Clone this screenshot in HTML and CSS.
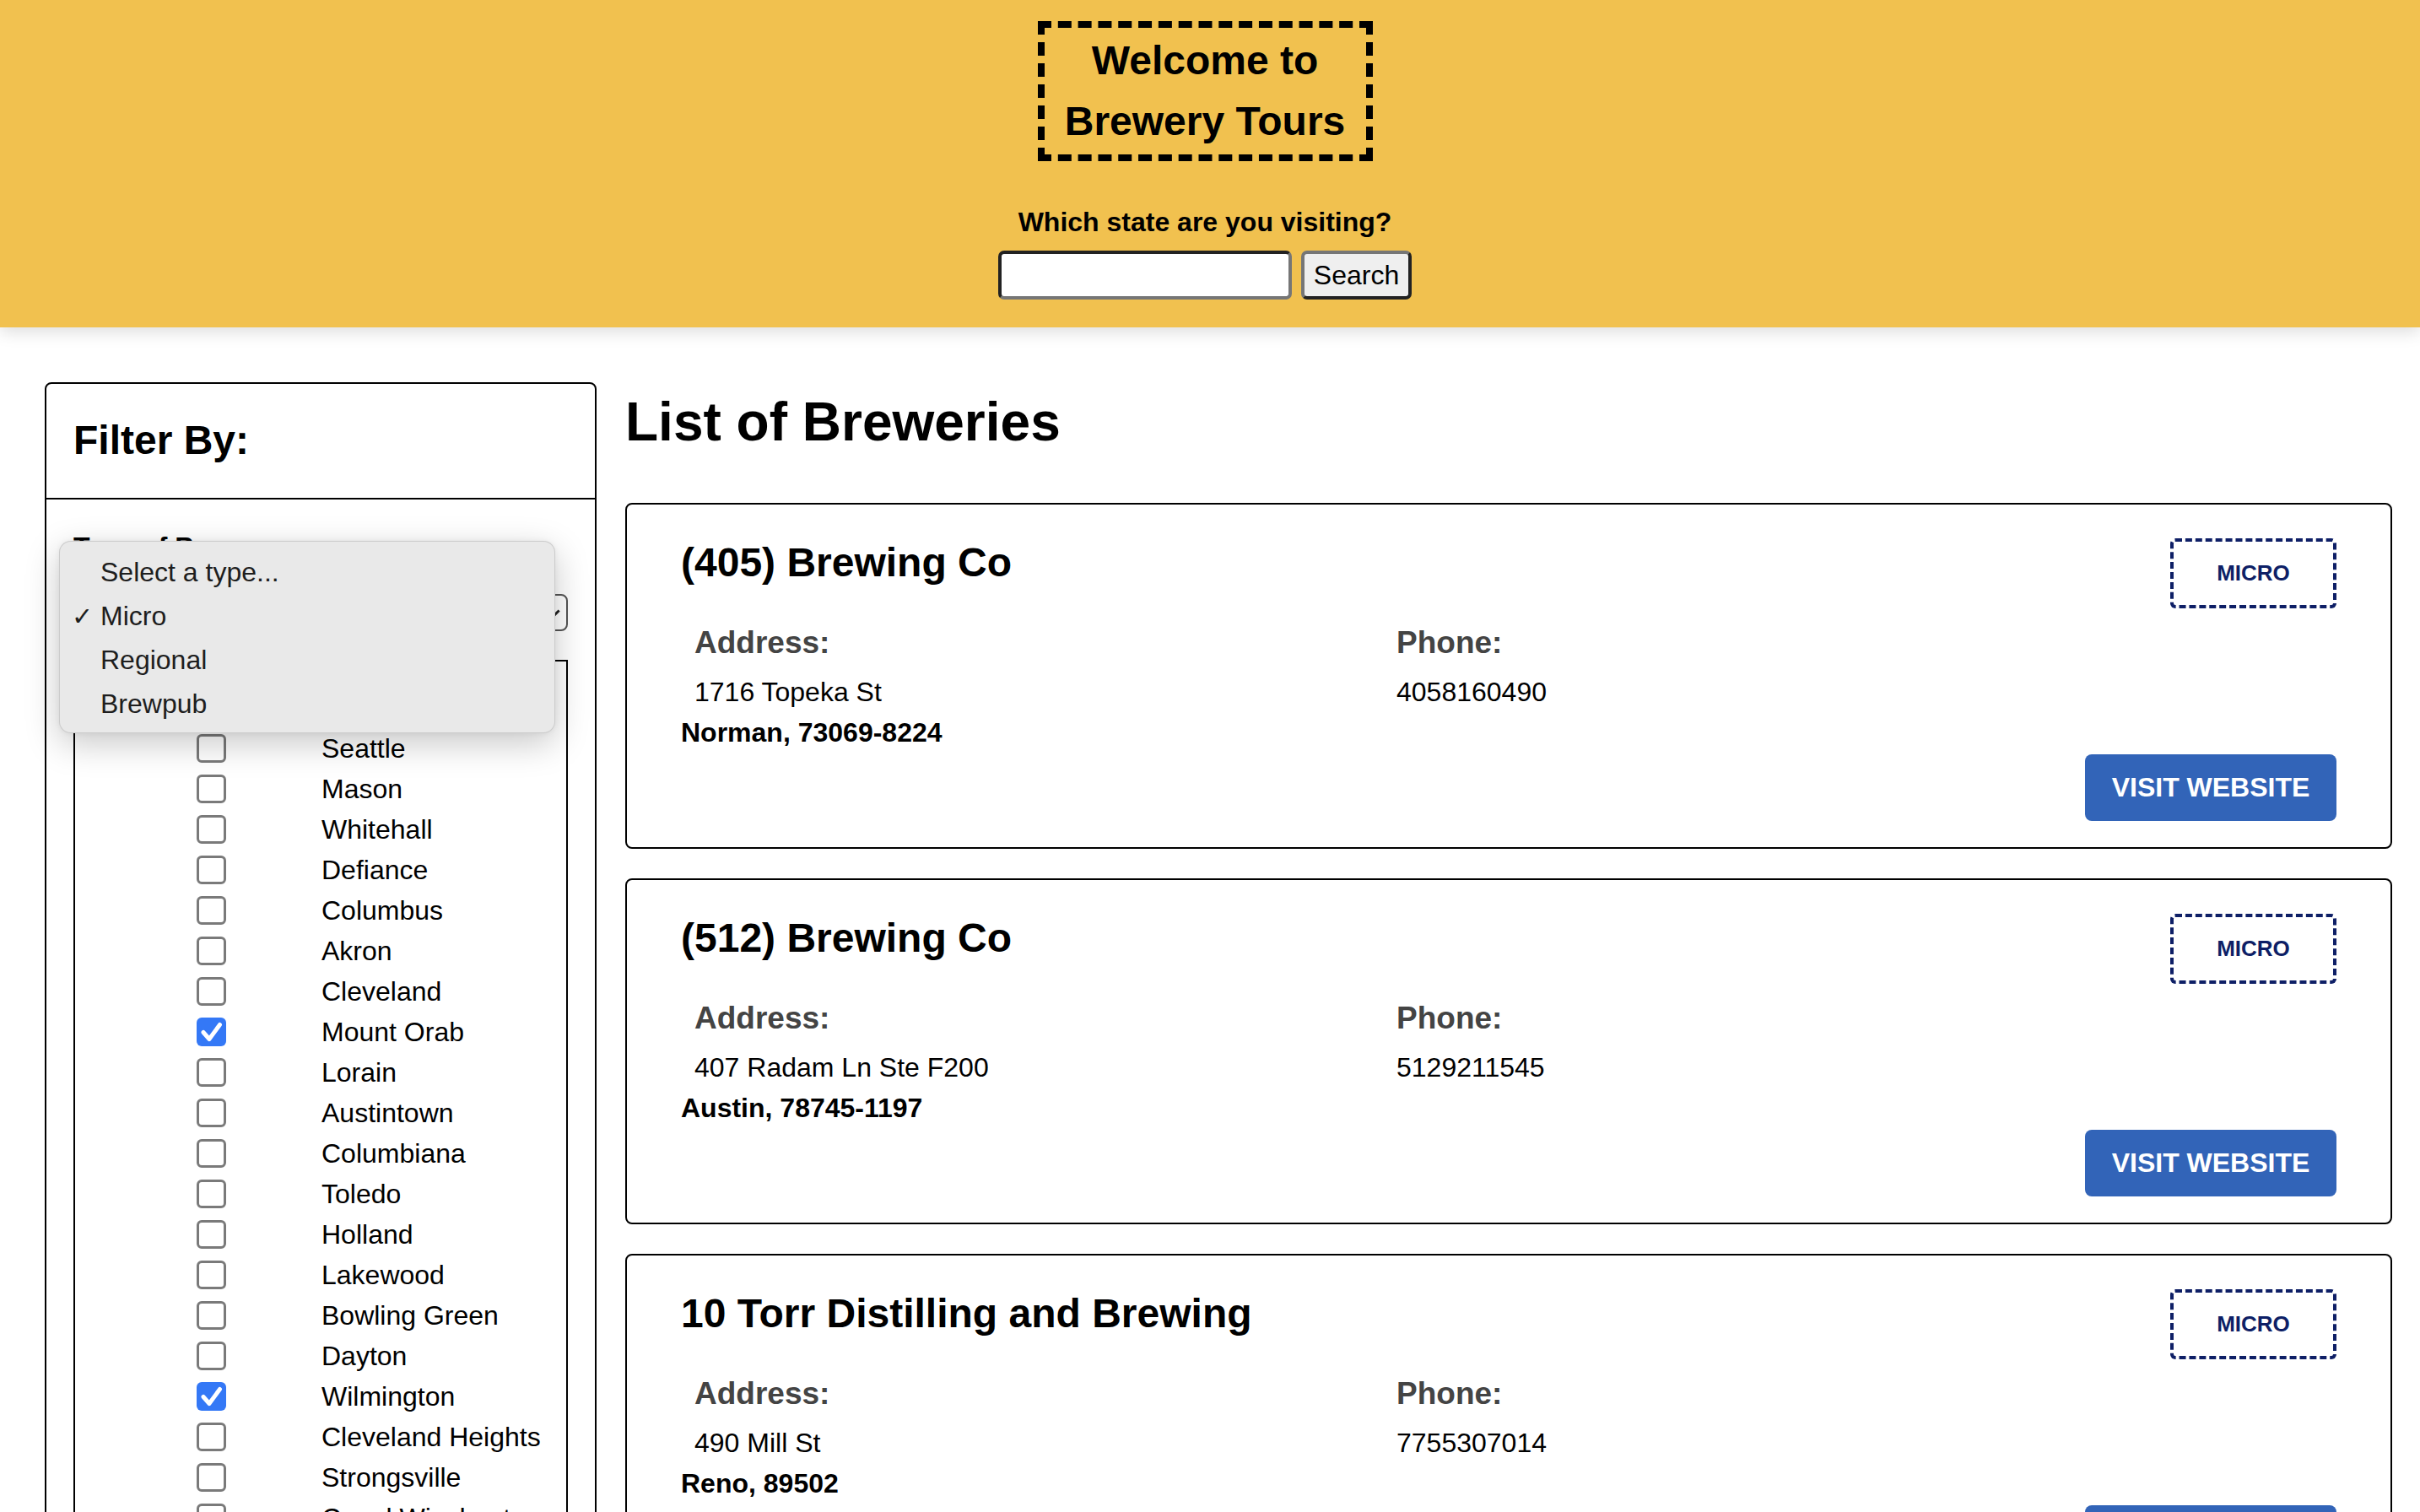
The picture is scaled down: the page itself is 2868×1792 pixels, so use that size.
FILE: index.html
```html
<!DOCTYPE html>
<html lang="en">
<head>
<meta charset="utf-8">
<title>Brewery Tours</title>
<link rel="stylesheet" href="styles.css">
</head>
<body>
<header class="site-header">
  <h1 class="site-title">Welcome to<br>Brewery Tours</h1>
  <form class="search-form">
    <label class="search-label" for="state">Which state are you visiting?</label>
    <div class="search-row">
      <input class="search-input" id="state" type="text">
      <button class="search-button" type="button">Search</button>
    </div>
  </form>
</header>

<main class="layout">
  <aside class="sidebar">
    <div class="sidebar-head">
      <h2 class="sidebar-title">Filter By:</h2>
    </div>
    <div class="sidebar-body">
      <div class="filter-label">Type of Brewery:</div>
      <div class="select-box"><span class="select-value">Micro</span><span class="select-arrow"></span></div>
      <div class="city-list">
        <label class="city"><span class="check"></span><span class="city-name">Cincinnati</span></label>
        <label class="city"><span class="check"></span><span class="city-name">Seattle</span></label>
        <label class="city"><span class="check"></span><span class="city-name">Mason</span></label>
        <label class="city"><span class="check"></span><span class="city-name">Whitehall</span></label>
        <label class="city"><span class="check"></span><span class="city-name">Defiance</span></label>
        <label class="city"><span class="check"></span><span class="city-name">Columbus</span></label>
        <label class="city"><span class="check"></span><span class="city-name">Akron</span></label>
        <label class="city"><span class="check"></span><span class="city-name">Cleveland</span></label>
        <label class="city"><span class="check is-checked"><svg viewBox="0 0 34 34"><path d="M7.5 17.5 L14.5 25.5 L27 8.5"/></svg></span><span class="city-name">Mount Orab</span></label>
        <label class="city"><span class="check"></span><span class="city-name">Lorain</span></label>
        <label class="city"><span class="check"></span><span class="city-name">Austintown</span></label>
        <label class="city"><span class="check"></span><span class="city-name">Columbiana</span></label>
        <label class="city"><span class="check"></span><span class="city-name">Toledo</span></label>
        <label class="city"><span class="check"></span><span class="city-name">Holland</span></label>
        <label class="city"><span class="check"></span><span class="city-name">Lakewood</span></label>
        <label class="city"><span class="check"></span><span class="city-name">Bowling Green</span></label>
        <label class="city"><span class="check"></span><span class="city-name">Dayton</span></label>
        <label class="city"><span class="check is-checked"><svg viewBox="0 0 34 34"><path d="M7.5 17.5 L14.5 25.5 L27 8.5"/></svg></span><span class="city-name">Wilmington</span></label>
        <label class="city"><span class="check"></span><span class="city-name">Cleveland Heights</span></label>
        <label class="city"><span class="check"></span><span class="city-name">Strongsville</span></label>
        <label class="city"><span class="check"></span><span class="city-name">Canal Winchester</span></label>
        <label class="city"><span class="check"></span><span class="city-name">Marietta</span></label>
      </div>
    </div>
    <ul class="dropdown">
      <li class="dropdown-item">Select a type...</li>
      <li class="dropdown-item is-selected"><span class="tick">✓</span>Micro</li>
      <li class="dropdown-item">Regional</li>
      <li class="dropdown-item">Brewpub</li>
    </ul>
  </aside>

  <section class="content">
    <h1 class="list-title">List of Breweries</h1>

    <article class="card">
      <div class="card-main">
        <h2 class="card-name">(405) Brewing Co</h2>
        <div class="card-details">
          <div>
            <h3 class="detail-label">Address:</h3>
            <p class="detail-value">1716 Topeka St</p>
          </div>
          <div>
            <h3 class="detail-label">Phone:</h3>
            <p class="detail-value">4058160490</p>
          </div>
        </div>
        <p class="card-city">Norman, 73069-8224</p>
      </div>
      <div class="card-side">
        <span class="badge">MICRO</span>
        <a class="visit-button" href="#">VISIT WEBSITE</a>
      </div>
    </article>

    <article class="card">
      <div class="card-main">
        <h2 class="card-name">(512) Brewing Co</h2>
        <div class="card-details">
          <div>
            <h3 class="detail-label">Address:</h3>
            <p class="detail-value">407 Radam Ln Ste F200</p>
          </div>
          <div>
            <h3 class="detail-label">Phone:</h3>
            <p class="detail-value">5129211545</p>
          </div>
        </div>
        <p class="card-city">Austin, 78745-1197</p>
      </div>
      <div class="card-side">
        <span class="badge">MICRO</span>
        <a class="visit-button" href="#">VISIT WEBSITE</a>
      </div>
    </article>

    <article class="card">
      <div class="card-main">
        <h2 class="card-name">10 Torr Distilling and Brewing</h2>
        <div class="card-details">
          <div>
            <h3 class="detail-label">Address:</h3>
            <p class="detail-value">490 Mill St</p>
          </div>
          <div>
            <h3 class="detail-label">Phone:</h3>
            <p class="detail-value">7755307014</p>
          </div>
        </div>
        <p class="card-city">Reno, 89502</p>
      </div>
      <div class="card-side">
        <span class="badge">MICRO</span>
        <a class="visit-button" href="#">VISIT WEBSITE</a>
      </div>
    </article>
  </section>
</main>
</body>
</html>
```

FILE: styles.css
```css
html {
  overflow: hidden;
}

body {
  margin: 0;
  font-family: "Liberation Sans", Arial, Helvetica, sans-serif;
  color: #000;
  background: #fff;
}

/* ---------- header ---------- */
.site-header {
  position: relative;
  z-index: 2;
  height: 388px;
  box-sizing: border-box;
  padding-right: 12px;
  background: #f1c14f;
  box-shadow: 0 6px 18px rgba(0, 0, 0, 0.13);
  display: flex;
  flex-direction: column;
  align-items: center;
}

.site-title {
  margin: 25px 0 0;
  width: 397px;
  box-sizing: border-box;
  padding: 3px 0;
  border: 8px dashed #000;
  text-align: center;
  font-size: 48px;
  line-height: 72px;
  font-weight: bold;
}

.search-form {
  display: flex;
  flex-direction: column;
  align-items: center;
}

.search-label {
  margin-top: 54px;
  font-size: 32px;
  line-height: 37px;
  font-weight: bold;
}

.search-row {
  display: flex;
  gap: 11px;
  margin-top: 15px;
}

.search-input {
  width: 348px;
  height: 58px;
  box-sizing: border-box;
  margin: 0;
  padding: 0 8px;
  background: #fff;
  border: 4px solid;
  border-color: #222 #767676 #767676 #222;
  border-radius: 7px;
  font: inherit;
  font-size: 30px;
}

.search-button {
  width: 131px;
  height: 58px;
  box-sizing: border-box;
  margin: 0;
  padding: 0;
  background: #efefef;
  border: 4px solid;
  border-color: #767676 #222 #222 #767676;
  border-radius: 7px;
  font-family: inherit;
  font-size: 32px;
  color: #000;
}

/* ---------- layout ---------- */
.layout {
  display: flex;
  align-items: flex-start;
  gap: 34px;
  padding: 65px 33px 0 53px;
}

/* ---------- sidebar ---------- */
.sidebar {
  position: relative;
  flex: none;
  width: 654px;
  box-sizing: border-box;
  border: 2px solid #000;
  border-radius: 8px;
}

.sidebar-head {
  padding: 39px 32px 41px;
  border-bottom: 2px solid #000;
}

.sidebar-title {
  margin: 0;
  font-size: 48px;
  line-height: 55px;
  font-weight: bold;
}

.sidebar-body {
  padding: 38px 32px 40px;
}

.filter-label {
  font-size: 32px;
  line-height: 37px;
  font-weight: bold;
}

.select-box {
  position: relative;
  margin-top: 37px;
  height: 44px;
  box-sizing: border-box;
  border: 2px solid #555;
  border-radius: 8px;
  padding: 0 16px;
  font-size: 28px;
  line-height: 40px;
}

.select-arrow {
  position: absolute;
  right: 10px;
  top: 12px;
  width: 10px;
  height: 10px;
  border-right: 3px solid #222;
  border-bottom: 3px solid #222;
  transform: rotate(45deg);
}

.city-list {
  margin-top: 34px;
  border: 2px solid #000;
  padding: 31px 0 20px;
}

.city {
  display: grid;
  grid-template-columns: 292px 1fr;
  align-items: center;
  height: 48px;
  font-size: 32px;
}

.check {
  display: block;
  margin-left: 144px;
  width: 35px;
  height: 34px;
  box-sizing: border-box;
  border: 3px solid #7a7a7a;
  border-radius: 6px;
  background: #fff;
}

.check.is-checked {
  border: none;
  background: #3478f6;
}

.check svg {
  display: block;
  width: 35px;
  height: 34px;
  fill: none;
  stroke: #fff;
  stroke-width: 5;
  stroke-linecap: round;
  stroke-linejoin: round;
}

.city-name {
  line-height: 48px;
}

.dropdown {
  position: absolute;
  left: 15px;
  top: 186px;
  width: 588px;
  height: 228px;
  box-sizing: border-box;
  margin: 0;
  padding: 10px 0 10px 48px;
  list-style: none;
  background: #e9e9e9;
  border: 1px solid rgba(0, 0, 0, 0.12);
  border-radius: 14px;
  box-shadow: 0 12px 40px rgba(0, 0, 0, 0.22), 0 0 6px rgba(0, 0, 0, 0.06);
}

.dropdown-item {
  position: relative;
  font-size: 32px;
  line-height: 52px;
  color: #1e1e1e;
}

.tick {
  position: absolute;
  left: -34px;
  top: 1px;
  font-family: "DejaVu Sans", sans-serif;
  font-size: 30px;
}

/* ---------- content ---------- */
.content {
  flex: 1;
  min-width: 0;
}

.list-title {
  margin: 10px 0 59px;
  font-size: 64px;
  line-height: 74px;
  font-weight: bold;
}

.card {
  display: flex;
  border: 2px solid #000;
  border-radius: 8px;
  padding: 40px 64px 31px;
  margin-bottom: 35px;
}

.card-main {
  flex: 1;
  min-width: 0;
}

.card-name {
  margin: 1px 0 0;
  font-size: 48px;
  line-height: 55px;
  font-weight: bold;
}

.card-details {
  display: grid;
  grid-template-columns: 832px 1fr;
  padding-left: 16px;
  margin-top: 46px;
}

.detail-label {
  margin: 0;
  font-size: 37px;
  line-height: 43px;
  font-weight: bold;
  color: #444;
}

.detail-value {
  margin: 19px 0 0;
  font-size: 32px;
  line-height: 37px;
}

.card-city {
  margin: 12px 0 0;
  font-size: 32px;
  line-height: 35px;
  font-weight: bold;
}

.card-side {
  display: flex;
  flex-direction: column;
  align-items: flex-end;
  width: 298px;
  flex: none;
}

.badge {
  display: flex;
  align-items: center;
  justify-content: center;
  width: 197px;
  height: 83px;
  box-sizing: border-box;
  border: 4px dashed #0e1f66;
  border-radius: 6px;
  color: #0e1f66;
  font-size: 26px;
  font-weight: bold;
}

.visit-button {
  display: flex;
  align-items: center;
  justify-content: center;
  margin-top: 173px;
  width: 298px;
  height: 79px;
  background: #3264b8;
  border-radius: 8px;
  color: #fff;
  text-decoration: none;
  font-size: 32px;
  font-weight: bold;
}
```
